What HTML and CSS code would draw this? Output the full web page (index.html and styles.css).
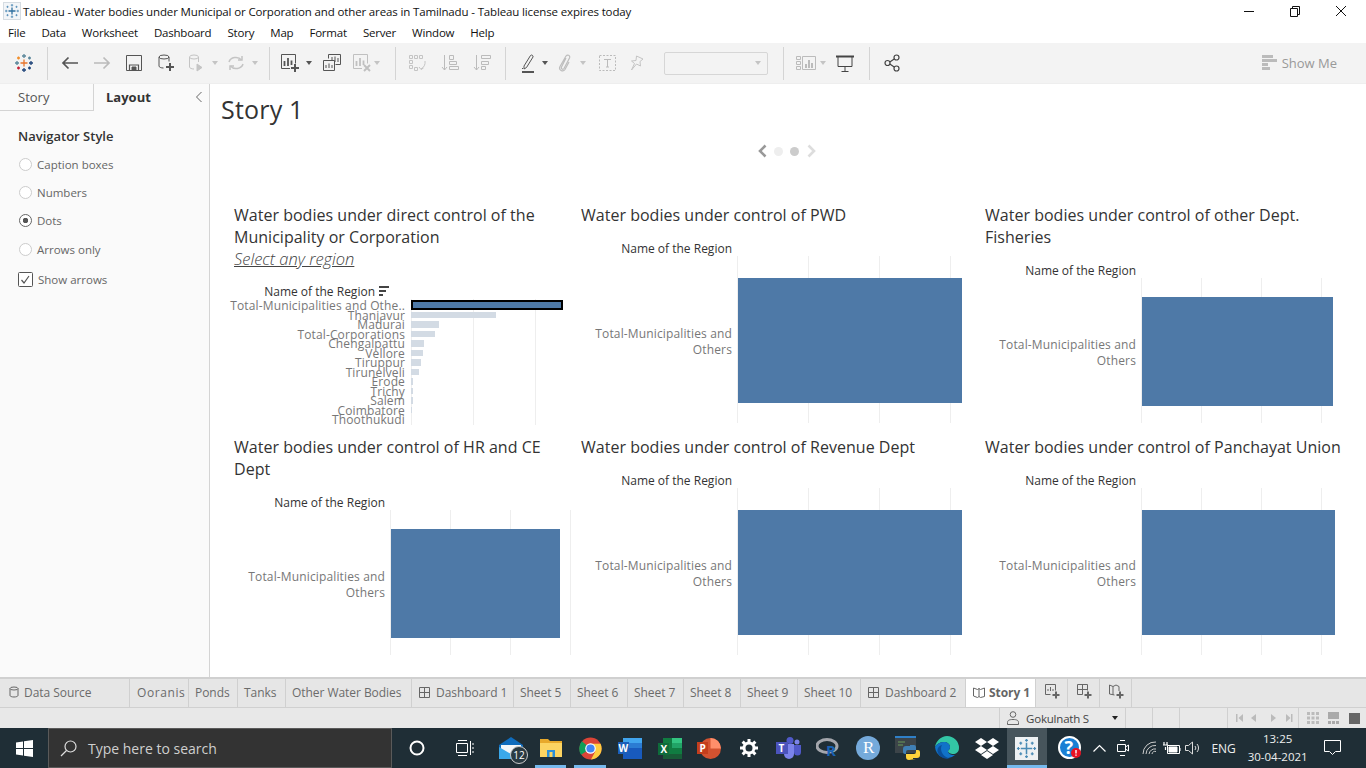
FILE: index.html
```html
<!DOCTYPE html>
<html lang="en">
<head>
    <meta charset="UTF-8">
    <title>Tableau - Water bodies under Municipal or Corporation and other areas in Tamilnadu</title>
    <link rel="stylesheet" href="styles.css">
</head>
<body>
    <div class="titlebar">
        <svg class="app-icon" width="18" height="18" viewBox="0 0 18 18" fill="none" stroke="#2f6f9f"><rect x="0.500" y="0.500" width="17" height="17" fill="#f2f5f8" stroke="#d5dce2"/><path d="M9 5.500v7M5.500 9h7" stroke-width="1.300"/><path d="M9 2v2.500M7.800 3.200h2.400M9 13.500V16M7.800 14.800h2.400M2 9h2.500M3.200 7.800v2.400M13.500 9H16M14.800 7.800v2.400M4.500 3.800v2M3.500 4.800h2M13.500 3.800v2M12.500 4.800h2M4.500 12.200v2M3.500 13.200h2M13.500 12.200v2M12.500 13.200h2" stroke="#5f94bb"/></svg>
        <span class="title-text">Tableau - Water bodies under Municipal or Corporation and other areas in Tamilnadu - Tableau license expires today</span>
        <div class="win-btns">
            <svg width="46" height="20" viewBox="0 0 46 20" fill="none" stroke="#111"><path d="M18 10.500h10"/></svg>
            <svg width="46" height="20" viewBox="0 0 46 20" fill="none" stroke="#111"><path d="M18.500 7.500h7v8h-7zM20.500 7V5.500h7v8h-2"/></svg>
            <svg width="46" height="20" viewBox="0 0 46 20" fill="none" stroke="#111"><path d="M18 5l10 10M28 5L18 15"/></svg>
        </div>
    </div>
    <div class="menubar">
        <span>File</span><span>Data</span><span>Worksheet</span><span>Dashboard</span><span>Story</span><span>Map</span><span>Format</span><span>Server</span><span>Window</span><span>Help</span>
    </div>

    <div class="toolbar">
        <div class="tb w47">
            <svg width="20" height="20" viewBox="0 0 20 20" fill="none" stroke-width="1.300"><path d="M10 6.500v7M6.500 10h7" stroke="#e8762d"/><path d="M10 1v4M8 3h4" stroke="#5b879b"/><path d="M10 15v4M8 17h4" stroke="#1f447a"/><path d="M3 8v4M1 10h4" stroke="#59879b"/><path d="M17 8v4M15 10h4" stroke="#1f447a"/><path d="M4.500 3.500v3M3 5h3" stroke="#f28e2b"/><path d="M15.500 3.500v3M14 5h3" stroke="#5b879b"/><path d="M4.500 13.500v3M3 15h3" stroke="#c72035"/><path d="M15.500 13.500v3M14 15h3" stroke="#1f447a"/></svg>
        </div>
        <i class="sep"></i>
        <div class="tb w36"><svg width="18" height="14" viewBox="0 0 18 14" fill="none" stroke="#555" stroke-width="1.700"><path d="M17 7H2M7.500 1.500L2 7l5.500 5.500"/></svg></div>
        <div class="tb w28"><svg width="18" height="14" viewBox="0 0 18 14" fill="none" stroke="#bbb" stroke-width="1.700"><path d="M1 7h15M10.500 1.500L16 7l-5.500 5.500"/></svg></div>
        <div class="tb w36"><svg width="16" height="16" viewBox="0 0 16 16" fill="none" stroke="#555"><path d="M.5.500h15v15H.5z"/><path d="M3.500 15v-5h9v5" stroke-width="1.200"/><path d="M6 12h4v3H6z" fill="#555"/></svg></div>
        <div class="tb w28"><svg width="18" height="18" viewBox="0 0 18 18" fill="none" stroke="#555"><ellipse cx="7" cy="3" rx="5" ry="2"/><path d="M2 3v9c0 1.200 2 2 4.500 2M12 3v4.500"/><path d="M13 9v8M9 13h8" stroke-width="2"/></svg></div>
        <div class="tb w32"><svg width="16" height="18" viewBox="0 0 16 18" fill="none" stroke="#c4c4c4"><ellipse cx="6" cy="3" rx="4.500" ry="2"/><path d="M1.500 3v10c0 1 2 2 4.500 2M10.500 3v5"/><path d="M9 10l5 3.500L9 17z" fill="#c4c4c4"/></svg></div>
        <div class="tb caret w8"><i class="tri off"></i></div>
        <div class="tb w32"><svg width="18" height="16" viewBox="0 0 18 16" fill="none" stroke="#c4c4c4" stroke-width="1.500"><path d="M2 7a7 6 0 0 1 12.500-2M16 9a7 6 0 0 1-12.500 2"/><path d="M15 1v4h-4M3 15v-4h4"/></svg></div>
        <div class="tb caret w17"><i class="tri off"></i></div>
        <i class="sep"></i>
        <div class="tb w32"><svg width="20" height="20" viewBox="0 0 20 20" fill="none" stroke="#555"><path d="M1.500 1.500h14v9M10 15.500H1.500v-14"/><path d="M4.500 8v5M8 5v8M11.500 7.500V12" stroke-width="1.800"/><path d="M15 11v8M11 15h8" stroke-width="2"/></svg></div>
        <div class="tb caret w8"><i class="tri"></i></div>
        <div class="tb w36"><svg width="18" height="18" viewBox="0 0 18 18" fill="none" stroke="#555"><path d="M5.500 4.500V.5h12v10h-5"/><path d="M.5 6.500h11v10H.5z" fill="#f3f3f3"/><path d="M9 3v3M12 2.500V8M15 4v4M3 11v3M6 9.500V14M9 11v3"/></svg></div>
        <div class="tb w24"><svg width="20" height="20" viewBox="0 0 20 20" fill="none" stroke="#c0c0c0"><path d="M1.500 1.500h14v9M10 15.500H1.500v-14"/><path d="M4.500 8v5M8 5v8M11.500 7.500V12" stroke-width="1.800"/><path d="M12 12l6 6M18 12l-6 6" stroke-width="2"/></svg></div>
        <div class="tb caret w21"><i class="tri off"></i></div>
        <i class="sep"></i>
        <div class="tb w36"><svg width="20" height="18" viewBox="0 0 20 18" fill="none" stroke="#c4c4c4"><path d="M1.500 1.500h3v3h-3zM6.500 1.500h3v3h-3zM11.500 1.500h3v3h-3zM1.500 6.500h3v3h-3zM1.500 11.500h3v3h-3zM6.500 13.500h3v3h-3z"/><path d="M17 7a8 8 0 0 1-4 8M11 13l2 2.500 2.500-1.500"/></svg></div>
        <div class="tb w28"><svg width="18" height="18" viewBox="0 0 18 18" fill="none" stroke="#bbb"><path d="M3.500 1v15M1 13l2.500 3L6 13"/><path d="M8.500 1.500h4v4h-4zM8.500 7.500h7v3h-7zM8.500 12.500h9v3h-9z"/></svg></div>
        <div class="tb w36"><svg width="18" height="18" viewBox="0 0 18 18" fill="none" stroke="#bbb"><path d="M3.500 1v15M1 13l2.500 3L6 13"/><path d="M8.500 1.500h9v3h-9zM8.500 7.500h7v3h-7zM8.500 12.500h4v3h-4z"/></svg></div>
        <i class="sep far"></i>
        <div class="tb w28 ml4"><svg width="14" height="20" viewBox="0 0 14 20" fill="none" stroke="#555"><path d="M3 13L9.500 2.500a1.500 1.500 0 0 1 2.500 1.500L5.500 14.500 3 16z"/><path d="M1 16l1-1"/><path d="M1 19h12" stroke-width="2"/></svg></div>
        <div class="tb caret w8"><i class="tri"></i></div>
        <div class="tb w30"><svg width="14" height="18" viewBox="0 0 14 18" fill="none" stroke="#bdbdbd" stroke-width="1.200"><path d="M8 4L3.500 13c-.8 2 1.500 3 2.500 1.500l5.500-10.500C12.500 1.500 9.500 0 8 2L2 12.500c-1.800 3.500 3 6 5 3L11 8"/></svg></div>
        <div class="tb caret w8"><i class="tri off"></i></div>
        <div class="tb w38"><svg width="17" height="16" viewBox="0 0 17 16" fill="none" stroke="#bbb"><path d="M.5.500h16v15H.5z" stroke-dasharray="2 1.500"/><path d="M5 4.500h7M8.500 4.500v7.500M7 12h3"/></svg></div>
        <div class="tb w22"><svg width="14" height="16" viewBox="0 0 14 16" fill="none" stroke="#c4c4c4"><path d="M6.500 1l6.500 3-3 2.500L10.500 11l-4-2L1.500 15l3-6.500L1.500 6 6 5.500z"/></svg></div>
        <div class="combo"><i class="tri off"></i></div>
        <i class="sep combo-sep"></i>
        <div class="tb w28 ml4"><svg width="20" height="16" viewBox="0 0 20 16" fill="none" stroke="#bbb"><path d="M.5 1.500h4v3h-4zM.5 6.500h4v3h-4zM.5 11.500h4v3h-4zM6.500 1.500h13v13h-13z"/><path d="M10 9v4M13 5v8M16 8v5" stroke-width="2"/></svg></div>
        <div class="tb caret w8"><i class="tri off"></i></div>
        <div class="tb w34"><svg width="18" height="17" viewBox="0 0 18 17" fill="none" stroke="#444"><path d="M0 1.500h18" stroke-width="2"/><path d="M2 2v9.500h14V2M9 11.500v4.500M5.500 16.500h7"/></svg></div>
        <i class="sep present-sep"></i>
        <div class="tb w36"><svg width="16" height="18" viewBox="0 0 16 18" fill="none" stroke="#444" stroke-width="1.200"><circle cx="12.500" cy="3.500" r="2.500"/><circle cx="3.500" cy="9" r="2.500"/><circle cx="12.500" cy="14.500" r="2.500"/><path d="M5.800 8l4.400-3M5.800 10l4.400 3"/></svg></div>
        <div class="showme">
            <svg width="15" height="16" viewBox="0 0 15 16" fill="#bbb"><path d="M0 0h11v3H0zM0 4h15v3H0zM0 8h6v3H0zM0 12h8v3H0z"/></svg>
            <span>Show Me</span>
        </div>
    </div>

    <div class="main">
        <aside class="sidebar">
            <div class="side-tabs">
                <div class="side-tab">Story</div>
                <div class="side-tab active">Layout</div>
                <svg class="collapse" width="8" height="12" viewBox="0 0 8 12" fill="none" stroke="#666"><path d="M6.500 1L1.500 6l5 5"/></svg>
            </div>
            <div class="side-body">
                <h4>Navigator Style</h4>
                <div class="opt"><i class="radio"></i>Caption boxes</div>
                <div class="opt"><i class="radio"></i>Numbers</div>
                <div class="opt"><i class="radio on"></i>Dots</div>
                <div class="opt"><i class="radio"></i>Arrows only</div>
                <div class="opt chk">
                    <svg width="15" height="15" viewBox="0 0 15 15" fill="none" stroke="#555"><rect x="0.500" y="0.500" width="14" height="14" rx="1" fill="#fff"/><path d="M3.500 8l2.500 3 5-7" stroke-width="1.200"/></svg>
                    Show arrows
                </div>
            </div>
        </aside>

        <section class="story">
            <h1>Story 1</h1>
            <div class="nav-dots">
                <svg width="10" height="14" viewBox="0 0 10 14" fill="none" stroke="#999" stroke-width="2.600"><path d="M8.500 1.500L3 7l5.500 5.500"/></svg>
                <i class="dot"></i>
                <i class="dot cur"></i>
                <svg width="10" height="14" viewBox="0 0 10 14" fill="none" stroke="#ddd" stroke-width="2.600"><path d="M1.500 1.500L7 7l-5.500 5.500"/></svg>
            </div>

            <div class="board">
                <div class="cell">
                    <h2>Water bodies under direct control of the Municipality or Corporation</h2>
                    <div class="hint">Select any region</div>
                    <div class="chart wide">
                        <div class="axis-name">Name of the Region
                            <svg width="11" height="10" viewBox="0 0 11 10" fill="#444"><path d="M0 0h10v2H0zM0 4h7v2H0zM0 8h4v2H0z"/></svg>
                        </div>
                        <div></div>
                        <div class="rows">
                            <div class="row">Total-Municipalities and Othe..</div>
                            <div class="row">Thanjavur</div>
                            <div class="row">Madurai</div>
                            <div class="row">Total-Corporations</div>
                            <div class="row">Chengalpattu</div>
                            <div class="row">Vellore</div>
                            <div class="row">Tiruppur</div>
                            <div class="row">Tirunelveli</div>
                            <div class="row">Erode</div>
                            <div class="row">Trichy</div>
                            <div class="row">Salem</div>
                            <div class="row">Coimbatore</div>
                            <div class="row">Thoothukudi</div>
                        </div>
                        <div class="plot g62 stack">
                            <div class="mini sel" style="width:152px"></div>
                            <div class="mini" style="width:85px"></div>
                            <div class="mini" style="width:28px"></div>
                            <div class="mini" style="width:24px"></div>
                            <div class="mini" style="width:13px"></div>
                            <div class="mini" style="width:12px"></div>
                            <div class="mini" style="width:10px"></div>
                            <div class="mini" style="width:8px"></div>
                            <div class="mini" style="width:2px"></div>
                            <div class="mini" style="width:2px"></div>
                            <div class="mini" style="width:2px"></div>
                            <div class="mini" style="width:1px"></div>
                            <div class="mini" style="width:0"></div>
                        </div>
                    </div>
                </div>

                <div class="cell">
                    <h2>Water bodies under control of PWD</h2>
                    <div class="chart">
                        <div class="axis-name">Name of the Region</div>
                        <div></div>
                        <div class="label">Total-Municipalities and Others</div>
                        <div class="plot g71"><div class="bar low" style="width:224px"></div></div>
                    </div>
                </div>

                <div class="cell">
                    <h2>Water bodies under control of other Dept. Fisheries</h2>
                    <div class="chart">
                        <div class="axis-name">Name of the Region</div>
                        <div></div>
                        <div class="label">Total-Municipalities and Others</div>
                        <div class="plot g60"><div class="bar low" style="width:191px"></div></div>
                    </div>
                </div>

                <div class="cell">
                    <h2>Water bodies under control of HR and CE Dept</h2>
                    <div class="chart">
                        <div class="axis-name">Name of the Region</div>
                        <div></div>
                        <div class="label">Total-Municipalities and Others</div>
                        <div class="plot g60"><div class="bar low" style="width:169px"></div></div>
                    </div>
                </div>

                <div class="cell">
                    <h2>Water bodies under control of Revenue Dept</h2>
                    <div class="chart">
                        <div class="axis-name">Name of the Region</div>
                        <div></div>
                        <div class="label">Total-Municipalities and Others</div>
                        <div class="plot g71"><div class="bar low" style="width:224px"></div></div>
                    </div>
                </div>

                <div class="cell">
                    <h2>Water bodies under control of Panchayat Union</h2>
                    <div class="chart">
                        <div class="axis-name">Name of the Region</div>
                        <div></div>
                        <div class="label">Total-Municipalities and Others</div>
                        <div class="plot g60"><div class="bar low" style="width:193px"></div></div>
                    </div>
                </div>
            </div>
        </section>
    </div>

    <div class="tabs">
        <div class="tab t130"><svg width="10" height="12" viewBox="0 0 10 12" fill="none" stroke="#666"><ellipse cx="5" cy="2.500" rx="4" ry="1.500"/><path d="M1 2.500v7c0 .8 1.800 1.500 4 1.500s4-.7 4-1.500v-7"/></svg>Data Source</div>
        <div class="tab t59">Ooranis</div>
        <div class="tab t49">Ponds</div>
        <div class="tab t48">Tanks</div>
        <div class="tab t126">Other Water Bodies</div>
        <div class="tab t102"><svg width="11" height="11" viewBox="0 0 11 11" fill="none" stroke="#666"><path d="M.5.500h10v10H.5zM5.500.5v10M.5 5.500h10"/></svg>Dashboard 1</div>
        <div class="tab t57">Sheet 5</div>
        <div class="tab t57">Sheet 6</div>
        <div class="tab t56">Sheet 7</div>
        <div class="tab t57">Sheet 8</div>
        <div class="tab t57">Sheet 9</div>
        <div class="tab t63">Sheet 10</div>
        <div class="tab t105"><svg width="11" height="11" viewBox="0 0 11 11" fill="none" stroke="#666"><path d="M.5.500h10v10H.5zM5.500.5v10M.5 5.500h10"/></svg>Dashboard 2</div>
        <div class="tab t70 cur"><svg width="12" height="11" viewBox="0 0 12 11" fill="none" stroke="#666"><path d="M.5 1L4.500 2.500 6 1.500l1.500 1L11.500 1v8.500l-4 1L6 9.500l-1.500 1-4-1.500zM6 1.500v8"/></svg>Story 1</div>
        <div class="tab t32 add"><svg width="16" height="16" viewBox="0 0 16 16" fill="none" stroke="#666"><path d="M.5.500h10v6M5.500 10.500h-5V.5"/><path d="M3 7V5M5.500 7V3M8 7V5"/><path d="M11 7.500v7M7.500 11h7" stroke-width="2"/></svg></div>
        <div class="tab t32 add"><svg width="16" height="16" viewBox="0 0 16 16" fill="none" stroke="#666"><path d="M.5.500h10v6M5.500 10.500h-5V.5M5.500.5v10M.5 5.500h10"/><path d="M11 7.500v7M7.500 11h7" stroke-width="2"/></svg></div>
        <div class="tab t32 add"><svg width="16" height="16" viewBox="0 0 16 16" fill="none" stroke="#666"><path d="M.5 1L4 2.500l3-1.500 3 1.500V7M5.500 11L.5 10V1M4 2.500v8.500"/><path d="M11 7.500v7M7.500 11h7" stroke-width="2"/></svg></div>
    </div>

    <div class="statusbar">
        <div class="user">
            <svg width="12" height="14" viewBox="0 0 12 14" fill="none" stroke="#666"><circle cx="6" cy="3.500" r="2.800"/><path d="M.5 13.500v-2c0-2 1.500-3 5.500-3s5.500 1 5.500 3v2z"/></svg>
            <span>Gokulnath S</span>
            <i class="tri dark"></i>
        </div>
        <div class="st w27"></div>
        <div class="st w27"></div>
        <div class="st w48"></div>
        <div class="st pager">
            <svg width="62" height="10" viewBox="0 0 62 10" fill="#bbb"><path d="M0 1h1.500v8H0zM7 1L2.500 5 7 9zM20 1l-5 4 5 4zM35 1l5 4-5 4zM50 1l4.500 4L50 9zM55 1h1.500v8H55z"/></svg>
        </div>
        <div class="st views">
            <svg width="12" height="12" viewBox="0 0 12 12" fill="#bbb"><path d="M0 0h3v3H0zM4.500 0h3v3h-3zM9 0h3v3H9zM0 4.500h3v3H0zM4.500 4.500h3v3h-3zM9 4.500h3v3H9zM0 9h3v3H0zM4.500 9h3v3h-3zM9 9h3v3H9z"/></svg>
            <svg width="12" height="12" viewBox="0 0 12 12" fill="#aaa"><path d="M0 0h11v7H0zM0 9h3v3H0zM4 9h3v3H4zM8 9h3v3H8z"/></svg>
            <svg width="11" height="11" viewBox="0 0 11 11" fill="#666"><path d="M0 0h11v11H0z"/></svg>
        </div>
    </div>

    <div class="taskbar">
        <div class="start"><svg width="17" height="17" viewBox="0 0 17 17" fill="#fff"><path d="M0 2.500l7-1V8H0zM8 1.300L17 0v8H8zM0 9h7v6.500l-7-1zM8 9h9v8l-9-1.300z"/></svg></div>
        <div class="search">
            <svg width="17" height="17" viewBox="0 0 17 17" fill="none" stroke="#ddd" stroke-width="1.200"><circle cx="10.500" cy="6.500" r="5.500"/><path d="M6.500 10.500L1 16"/></svg>
            <span>Type here to search</span>
        </div>
        <div class="task cortana"><svg width="16" height="16" viewBox="0 0 16 16" fill="none" stroke="#fff" stroke-width="2"><circle cx="8" cy="8" r="6.500"/></svg></div>
        <div class="task taskview"><svg width="18" height="16" viewBox="0 0 18 16" fill="none" stroke="#fff"><path d="M.5 3.500h11v9H.5zM2 .5h9M2 15.500h9M14.500 1v14M17 3v2M17 7v2M17 11v2"/></svg></div>
        <div class="task app first">
            <svg width="24" height="22" viewBox="0 0 24 22"><path d="M0 8L12 0l12 8v14H0z" fill="#0f6cbd"/><path d="M2 8h20v6l-10 5-10-5z" fill="#f3f6f8"/><path d="M0 10l12 7 12-7v12H0z" fill="#3aa8ea"/></svg>
            <em class="badge">12</em>
        </div>
        <div class="task app open">
            <svg width="22" height="20" viewBox="0 0 22 20"><path d="M0 1h8l2 2h12v16H0z" fill="#e8a92b"/><path d="M0 5h22v14H0z" fill="#fcd462"/><path d="M7 12h8v7H7z" fill="#2b8fd9"/><path d="M9.500 14h3v5h-3z" fill="#fcd462"/></svg>
        </div>
        <div class="task app open">
            <svg width="23" height="23" viewBox="0 0 24 24"><circle cx="12" cy="12" r="11.500" fill="#db4437"/><path d="M12 12L2.200 18.500A11.500 11.500 0 0 1 3 4.500z" fill="#0f9d58"/><path d="M12 7h10.500a11.500 11.500 0 0 1-10 16.500L17 15z" fill="#ffcd40"/><circle cx="12" cy="12" r="5.500" fill="#fff"/><circle cx="12" cy="12" r="4.300" fill="#4285f4"/></svg>
        </div>
        <div class="task app">
            <svg width="24" height="21" viewBox="0 0 24 21"><path d="M5 0h19v21H5z" fill="#185abd"/><path d="M5 0h19v5H5z" fill="#41a5ee"/><path d="M5 5h19v5H5z" fill="#2b7cd3"/><path d="M0 4h11v12H0z" fill="#1b5eb9"/><text x="0.500" y="14" class="tile-txt">W</text></svg>
        </div>
        <div class="task app">
            <svg width="24" height="21" viewBox="0 0 24 21"><path d="M5 0h19v21H5z" fill="#107c41"/><path d="M14 0h10v5H14z" fill="#33c481"/><path d="M14 5h10v5H14z" fill="#21a366"/><path d="M5 16h19v5H5z" fill="#185c37"/><path d="M0 5h11v12H0z" fill="#0e6b3a"/><text x="2.500" y="15" class="tile-txt">X</text></svg>
        </div>
        <div class="task app">
            <svg width="24" height="21" viewBox="0 0 24 21"><circle cx="13.500" cy="10.500" r="10.500" fill="#d35230"/><path d="M13.500 0A10.500 10.500 0 0 1 24 10.500H13.500z" fill="#ff8f6b"/><path d="M0 4h11v12H0z" fill="#c43e1c"/><text x="2.500" y="14" class="tile-txt">P</text></svg>
        </div>
        <div class="task app">
            <svg width="18" height="18" viewBox="0 0 18 18" fill="none" stroke="#fff"><circle cx="9" cy="9" r="5" stroke-width="3"/><path d="M9 0v4M9 14v4M0 9h4M14 9h4M2.600 2.600l2.800 2.800M12.600 12.600l2.800 2.800M15.400 2.600l-2.800 2.800M5.400 12.600l-2.800 2.800" stroke-width="3"/></svg>
        </div>
        <div class="task app">
            <svg width="25" height="22" viewBox="0 0 25 22"><circle cx="14" cy="3.500" r="3.500" fill="#5059c9"/><circle cx="21" cy="5" r="2.500" fill="#7b83eb"/><path d="M8 7h10v10a5 5 0 0 1-10 0z" fill="#7b83eb"/><path d="M18 8h7v7a3.500 3.500 0 0 1-7 0z" fill="#5059c9"/><path d="M0 5h12v12H0z" fill="#4b53bc"/><text x="2.500" y="14.500" class="tile-txt">T</text></svg>
        </div>
        <div class="task app">
            <svg width="24" height="26" viewBox="0 0 24 26"><ellipse cx="11" cy="11" rx="10" ry="6.500" fill="none" stroke="#a4a6ac" stroke-width="3"/><text x="10" y="21" class="r-txt">R</text></svg>
        </div>
        <div class="task app">
            <svg width="24" height="24" viewBox="0 0 24 24"><circle cx="12" cy="12" r="12" fill="#75aadb"/><text x="7" y="17" class="rs-txt">R</text></svg>
        </div>
        <div class="task app">
            <svg width="26" height="24" viewBox="0 0 26 24"><path d="M0 0h21v17H0z" fill="#3c4449"/><path d="M0 0h21v2H0z" fill="#2f80c8"/><path d="M3 6h7M3 9h5" stroke="#6a9a5b"/><path d="M14 9h5a2 2 0 0 1 2 2v3h-8a2 2 0 0 0-2 2v2h-1a2 2 0 0 1-2-2v-3a3 3 0 0 1 3-3h4v-1h-4z" fill="#3f7fb5"/><path d="M14 24a3 3 0 0 1-3-3v-3h8a2 2 0 0 0 2-2v-2h2a2 2 0 0 1 2 2v3a3 3 0 0 1-3 3h-4v1h3z" fill="#ffd43b"/></svg>
        </div>
        <div class="task app">
            <svg width="24" height="24" viewBox="0 0 24 24"><path d="M12 0a12 12 0 0 1 12 12c0 4-3 6-6 6-2 0-5-1-5-3 0-1 2-1 2-4 0-3-3-5-6-5C5 6 1.500 8 0 11 1 5 6 0 12 0z" fill="#33c6a5"/><path d="M0 11c1.500-3 5-5 9-5 3 0 6 2 6 5 0 3-2 3-2 4 0 3 4 4.500 7 4a12 12 0 0 1-20-8z" fill="#1172c8"/><path d="M3 17c-1.500-3 0-7 4-8-2 3-1 9 4 12 1 .5 2 1 4 1-5 2-10-1-12-5z" fill="#0b4f9a"/></svg>
        </div>
        <div class="task app">
            <svg width="24" height="21" viewBox="0 0 24 21" fill="#fff"><path d="M6 0l6 4-6 4-6-4zM18 0l6 4-6 4-6-4zM6 8l6 4-6 4-6-4zM18 8l6 4-6 4-6-4zM12 13l6 4-6 4-6-4z"/></svg>
        </div>
        <div class="task app running">
            <svg width="23" height="23" viewBox="0 0 24 24" fill="none" stroke="#4a8bb5" stroke-width="1.300"><rect width="24" height="24" fill="#eef1f3" stroke="none"/><path d="M12 6v12M6 12h12" stroke-width="1.600"/><path d="M12 2v3M10.500 3.500h3M12 19v3M10.500 20.500h3M2 12h3M3.500 10.500v3M19 12h3M20.500 10.500v3M6 5v3M4.500 6.500h3M18 5v3M16.500 6.500h3M6 16v3M4.500 17.500h3M18 16v3M16.500 17.500h3"/></svg>
        </div>
        <div class="tray-help">
            <svg width="24" height="24" viewBox="0 0 24 24"><circle cx="11.500" cy="11.500" r="10.500" fill="#1a7fd4" stroke="#fff" stroke-width="2"/><text x="6.500" y="18" class="help-txt">?</text><circle cx="18" cy="17" r="5" fill="#e81123"/><path d="M18 14v3.500M18 18.500v1.200" stroke="#fff" stroke-width="1.400"/></svg>
        </div>
        <div class="tray tray13"><svg width="13" height="8" viewBox="0 0 13 8" fill="none" stroke="#fff" stroke-width="1.200"><path d="M.5 7.500l6-6 6 6"/></svg></div>
        <div class="tray tray34"><svg width="12" height="18" viewBox="0 0 12 18" fill="none" stroke="#fff"><path d="M3 1.500h5M3 16.500h5M.5 5.500h8v7h-8zM8.500 8l3-2v6l-3-2"/></svg></div>
        <div class="tray tray18"><svg width="14" height="14" viewBox="0 0 14 14" fill="none" stroke="#ccc"><path d="M1 13A12 12 0 0 1 14 1M4 13a9 9 0 0 1 10-8.500M7 13a6 6 0 0 1 7-5M10 13a3 3 0 0 1 4-2.500"/></svg></div>
        <div class="tray tray28"><svg width="18" height="14" viewBox="0 0 18 14" fill="none" stroke="#fff"><path d="M4.500 4.500h12v8h-12zM17 7v3"/><path d="M6 6h8v5H6z" fill="#fff"/><path d="M1 1v3M4 1v3M0 4h5M2.500 6v3" stroke-width="1.200"/></svg></div>
        <div class="tray tray14"><svg width="16" height="14" viewBox="0 0 16 14" fill="none" stroke="#ddd"><path d="M.5 4.500h3L7.500 1v12L3.500 9.500h-3zM10 5a3 3 0 0 1 0 4M12 3a6 6 0 0 1 0 8"/></svg></div>
        <div class="tray tray48 eng">ENG</div>
        <div class="clock"><span>13:25</span><span>30-04-2021</span></div>
        <div class="tray tray50"><svg width="17" height="16" viewBox="0 0 17 16" fill="none" stroke="#fff"><path d="M.5.500h16v11h-5l-3 3-3-3h-5z"/></svg></div>
    </div>
</body>
</html>
```

FILE: styles.css
```css
* { box-sizing: border-box; }

html, body { margin: 0; padding: 0; }

body {
    width: 1366px;
    height: 768px;
    overflow: hidden;
    display: flex;
    flex-direction: column;
    font-family: "Open Sans", "Noto Sans", sans-serif;
    background: #fff;
    color: #333;
}

i { font-style: normal; }
svg { display: block; flex: none; }

/* window chrome */
.titlebar {
    height: 22px;
    display: flex;
    align-items: center;
    padding-left: 3px;
    font-size: 11.500px;
    color: #111;
}
.app-icon { margin-right: 2px; }
.title-text { letter-spacing: -.14px; }
.win-btns { margin-left: auto; display: flex; margin-right: 2px; }
.menubar {
    height: 21px;
    display: flex;
    align-items: center;
    gap: 16px;
    padding-left: 8px;
    font-size: 11.500px;
    color: #111;
    letter-spacing: -.2px;
}

/* toolbar */
.toolbar {
    height: 41px;
    background: #f3f3f3;
    border-bottom: 1px solid #eee;
    display: flex;
    align-items: center;
}
.tb { display: flex; align-items: center; justify-content: center; height: 100%; flex: none; }
.tb.caret { justify-content: flex-start; }
.w47 { width: 47px; }
.w38 { width: 38px; }
.w36 { width: 36px; }
.w34 { width: 34px; }
.w32 { width: 32px; }
.w30 { width: 30px; }
.w28 { width: 28px; }
.w24 { width: 24px; }
.w22 { width: 22px; }
.w21 { width: 21px; }
.w17 { width: 17px; }
.w8 { width: 8px; }
.ml4 { margin-left: 4px; }
.sep {
    width: 1px;
    height: 33px;
    background: #d4d4d4;
    margin-right: 4px;
    flex: none;
}
.sep.far { margin-left: 5px; }
.combo-sep { margin-left: 15px; }
.present-sep { margin-left: 7px; }
.tri {
    display: block;
    width: 0;
    height: 0;
    border-left: 3.500px solid transparent;
    border-right: 3.500px solid transparent;
    border-top: 4px solid #555;
}
.tri.off { border-top-color: #c4c4c4; }
.tri.dark { border-top-color: #222; }
.combo {
    width: 104px;
    height: 23px;
    margin-left: 16px;
    border: 1px solid #d6d6d6;
    border-radius: 2px;
    background: #f3f3f3;
    display: flex;
    align-items: center;
    justify-content: flex-end;
    padding-right: 6px;
}
.showme {
    margin-left: auto;
    padding-right: 29px;
    display: flex;
    align-items: center;
    gap: 5px;
    font-size: 13px;
    color: #999;
}

/* main */
.main { flex: 1; display: flex; min-height: 0; }
.sidebar {
    width: 210px;
    flex: none;
    background: #fafafa;
    border-right: 1px solid #d4d4d4;
}
.side-tabs { display: flex; height: 27px; position: relative; font-size: 13px; }
.side-tab {
    width: 93px;
    padding: 4px 0 0 18px;
    color: #555;
    border-bottom: 1px solid #d4d4d4;
}
.side-tab.active {
    width: 116px;
    padding-left: 12px;
    font-weight: 700;
    color: #333;
    border-bottom: 0;
    border-left: 1px solid #d4d4d4;
}
.collapse { position: absolute; left: 195px; top: 7px; }
.side-body { padding: 16px 0 0 18px; }
.side-body h4 {
    margin: 0 0 5px;
    font-size: 13px;
    line-height: 18px;
    font-weight: 600;
    color: #333;
}
.opt {
    height: 28.400px;
    display: flex;
    align-items: center;
    gap: 5px;
    font-size: 11.500px;
    color: #666;
}
.radio {
    width: 13px;
    height: 13px;
    margin-left: 1px;
    border: 1px solid #ccc;
    border-radius: 50%;
    background: #fff;
}
.radio.on {
    border-color: #666;
    background: radial-gradient(circle, #555 0 2.500px, #fff 3px);
}
.chk { margin-top: 2px; }

/* story */
.story { flex: 1; min-width: 0; }
.story h1 {
    margin: 11px 0 0 11px;
    font-size: 25px;
    line-height: 28px;
    font-weight: 400;
    letter-spacing: .2px;
    color: #333;
}
.nav-dots {
    height: 20px;
    margin-top: 18px;
    padding-right: 3px;
    display: flex;
    align-items: center;
    justify-content: center;
    gap: 5px;
}
.nav-dots svg:first-child { margin-right: 1px; }
.nav-dots svg:last-child { margin-left: 2px; }
.dot { width: 9px; height: 9px; border-radius: 50%; background: #eee; margin: 0 1px; }
.dot.cur { background: #ccc; }

.board {
    margin: 44px 0 0 24px;
    display: grid;
    grid-template-columns: 347px 404px 1fr;
    grid-auto-rows: 218px;
    row-gap: 14px;
}
.cell { display: flex; flex-direction: column; min-width: 0; }
.cell h2 {
    margin: -1px 0 0;
    font-size: 16px;
    line-height: 22px;
    font-weight: 400;
    color: #333;
    width: 330px;
    letter-spacing: .02px;
}
.cell:nth-child(3) h2, .cell:nth-child(5) h2, .cell:nth-child(6) h2 { width: 360px; }
.hint {
    font-size: 16.500px;
    line-height: 21px;
    font-style: italic;
    font-weight: 300;
    color: #444;
    text-decoration: underline;
}
.chart {
    flex: 1;
    min-height: 0;
    margin-top: 14px;
    display: grid;
    grid-template-columns: 156px 231px;
    grid-template-rows: 16px 1fr;
}
.chart.wide { grid-template-columns: 177px 170px; }
.axis-name {
    padding-right: 5px;
    display: flex;
    align-items: center;
    justify-content: flex-end;
    gap: 4px;
    font-size: 12px;
    font-weight: 500;
    color: #333;
    white-space: nowrap;
}
.wide .axis-name { padding-right: 21px; }
.label {
    align-self: center;
    padding: 4px 5px 0 0;
    text-align: right;
    font-size: 12px;
    letter-spacing: .14px;
    line-height: 16px;
    color: #777;
}
.plot {
    display: flex;
    align-items: center;
    background: linear-gradient(90deg, #eee 1px, transparent 1px) 0 0 / 71px 100%;
}
.plot.g62 { background-size: 62px 100%; }
.plot.g60 { background-size: 60px 100%; }
.bar { height: 75%; margin-left: 1px; background: #4e79a7; }
.bar.low { margin-top: 2px; }
.rows { padding: 2px 6px 0 0; }
.row {
    height: 9.500px;
    line-height: 9.500px;
    display: flex;
    justify-content: flex-end;
    font-size: 12px;
    letter-spacing: .14px;
    color: #777;
    white-space: nowrap;
}
.plot.stack {
    flex-direction: column;
    align-items: flex-start;
    padding-top: 1px;
}
.mini { height: 9.500px; padding: 1.500px 0; flex: none; }
.mini::before { content: ""; display: block; height: 100%; background: #d3dbe4; }
.mini.sel { height: 10px; padding: 0; border: 2px solid #000; background: #4e79a7; }
.mini.sel::before { display: none; }

/* tabs */
.tabs {
    height: 31px;
    flex: none;
    display: flex;
    background: #e6e6e6;
    border-top: 2px solid #d0d0d0;
    border-bottom: 1px solid #d0d0d0;
    font-size: 12px;
    color: #6b6b6b;
}
.tab {
    display: flex;
    align-items: center;
    gap: 6px;
    padding-left: 7px;
    padding-bottom: 2px;
    border-right: 1px solid #d0d0d0;
    white-space: nowrap;
    flex: none;
    letter-spacing: -.05px;
}
.t130 { width: 130px; padding-left: 9px; gap: 5px; }
.t126 { width: 126px; padding-left: 6px; }
.t105 { width: 105px; }
.t102 { width: 102px; }
.t70 { width: 70px; }
.t63 { width: 63px; padding-left: 6px; }
.t59 { width: 59px; letter-spacing: .6px; }
.t57 { width: 57px; padding-left: 6px; }
.t56 { width: 56px; padding-left: 6px; }
.t49 { width: 49px; padding-left: 6px; }
.t48 { width: 48px; padding-left: 6px; }
.t32 { width: 32px; }
.tab.cur { background: #fff; font-weight: 700; color: #666; gap: 4px; }
.tab.add { padding-left: 9px; }

.statusbar {
    height: 20px;
    flex: none;
    display: flex;
    justify-content: flex-end;
    background: #e8e8e8;
    font-size: 11.500px;
    color: #444;
}
.user {
    width: 127px;
    display: flex;
    align-items: center;
    padding-left: 7px;
    border-left: 1px solid #d0d0d0;
    border-right: 1px solid #d0d0d0;
}
.user span { margin-left: 7px; letter-spacing: -.2px; }
.user .tri { margin-left: 23px; }
.st { border-right: 1px solid #d0d0d0; flex: none; }
.w27 { width: 27px; }
.w48 { width: 48px; }
.pager { width: 71px; display: flex; align-items: center; padding-left: 8px; }
.views {
    width: 67px;
    display: flex;
    align-items: center;
    gap: 9px;
    padding-left: 8px;
    border-right: 0;
}

/* windows taskbar */
.taskbar {
    height: 40px;
    flex: none;
    display: flex;
    align-items: center;
    background: #1f2e36;
    color: #fff;
    font-size: 12px;
}
.start { width: 48px; display: flex; justify-content: center; }
.search {
    width: 344px;
    height: 40px;
    display: flex;
    align-items: center;
    gap: 11px;
    padding-left: 11px;
    background: #333;
    border: 1px solid #5a5a5a;
    font-size: 14px;
    color: #cfcfcf;
}
.task {
    height: 40px;
    flex: none;
    display: flex;
    align-items: center;
    justify-content: center;
    position: relative;
}
.cortana { width: 49px; }
.taskview { width: 47px; }
.first { margin-left: 3px; }
.app { width: 39.700px; }
.open::after, .running::after {
    content: "";
    position: absolute;
    left: 4px;
    right: 4px;
    bottom: 0;
    height: 3px;
    background: #76b9ed;
}
.running { background: #47555c; }
.running::after { left: 0; right: 0; }
.badge {
    position: absolute;
    left: 19px;
    top: 18px;
    width: 18px;
    height: 18px;
    border-radius: 50%;
    border: 1px solid #ccc;
    background: #2a3a42;
    font-size: 10px;
    font-style: normal;
    line-height: 16px;
    text-align: center;
}
.tile-txt { font-size: 10px; font-weight: 700; fill: #fff; }
.r-txt { font-size: 15px; font-weight: 700; fill: #1a63b5; }
.rs-txt { font-family: "Liberation Serif", serif; font-size: 17px; fill: #fff; }
.help-txt { font-size: 18px; font-weight: 700; fill: #fff; }
.tray-help { width: 46px; display: flex; justify-content: center; flex: none; }
.tray { display: flex; justify-content: center; align-items: center; flex: none; }
.tray13 { width: 13px; }
.tray34 { width: 34px; }
.tray18 { width: 18px; }
.tray28 { width: 28px; }
.tray14 { width: 14px; }
.tray48 { width: 48px; }
.tray50 { width: 50px; }
.eng { font-size: 12px; color: #eee; }
.clock {
    width: 60px;
    flex: none;
    display: flex;
    flex-direction: column;
    align-items: center;
    font-size: 11.500px;
    line-height: 18px;
    color: #eee;
}
```
